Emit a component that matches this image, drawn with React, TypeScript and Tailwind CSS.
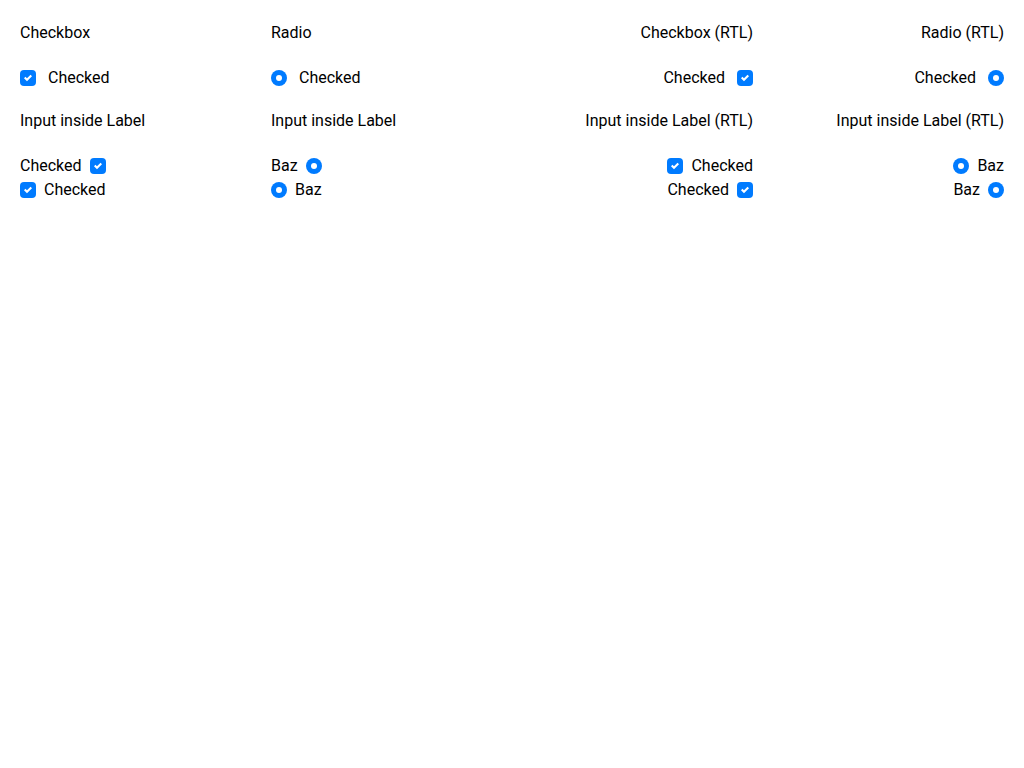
import React from 'react';

const CheckBox: React.FC = () => (
  <span className="inline-flex h-4 w-4 shrink-0 items-center justify-center rounded-[4px] bg-[#007bff]">
    <svg width="8" height="8" viewBox="0 0 8 8">
      <path fill="#fff" d="M6.564.75l-3.59 3.612-1.538-1.55L0 4.26 2.974 7.25 8 2.193z" />
    </svg>
  </span>
);

const RadioDot: React.FC = () => (
  <span className="inline-flex h-4 w-4 shrink-0 items-center justify-center rounded-full bg-[#007bff]">
    <span className="h-1.5 w-1.5 rounded-full bg-white" />
  </span>
);

type Kind = 'checkbox' | 'radio';

const Control: React.FC<{ kind: Kind }> = ({ kind }) => (kind === 'checkbox' ? <CheckBox /> : <RadioDot />);

const Column: React.FC<{ kind: Kind; rtl?: boolean }> = ({ kind, rtl }) => {
  const title = kind === 'checkbox' ? 'Checkbox' : 'Radio';
  const word = kind === 'checkbox' ? 'Checked' : 'Baz';
  const align = rtl ? 'justify-end' : 'justify-start';
  return (
    <div className={rtl ? 'flex flex-col text-right' : 'flex flex-col'}>
      <div className="h-6 leading-6">{title}{rtl ? ' (RTL)' : ''}</div>
      <div className={`mt-[21px] flex h-6 items-center gap-3 ${align}`}>
        {rtl ? (
          <>
            <span>Checked</span>
            <Control kind={kind} />
          </>
        ) : (
          <>
            <Control kind={kind} />
            <span>Checked</span>
          </>
        )}
      </div>
      <div className="mt-[19px] h-6 leading-6">Input inside Label{rtl ? ' (RTL)' : ''}</div>
      <div className="mt-[21px] flex flex-col">
        <label className={`flex h-6 items-center gap-2 ${align}`}>
          {rtl ? (
            <>
              <Control kind={kind} />
              <span>{word}</span>
            </>
          ) : (
            <>
              <span>{word}</span>
              <Control kind={kind} />
            </>
          )}
        </label>
        <label className={`flex h-6 items-center gap-2 ${align}`}>
          {rtl ? (
            <>
              <span>{word}</span>
              <Control kind={kind} />
            </>
          ) : (
            <>
              <Control kind={kind} />
              <span>{word}</span>
            </>
          )}
        </label>
      </div>
    </div>
  );
};

export default function App() {
  return (
    <div className="min-h-screen bg-white px-5 pt-[21px] font-['Roboto',sans-serif] text-base text-black">
      <div className="grid grid-cols-4 gap-5">
        <Column kind="checkbox" />
        <Column kind="radio" />
        <Column kind="checkbox" rtl />
        <Column kind="radio" rtl />
      </div>
    </div>
  );
}
